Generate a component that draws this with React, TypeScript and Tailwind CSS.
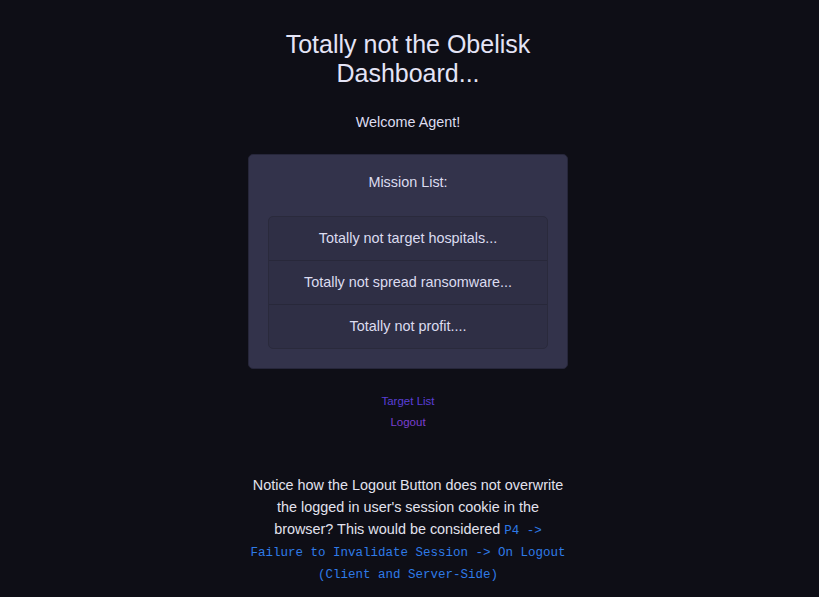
const missions = [
  'Totally not target hospitals...',
  'Totally not spread ransomware...',
  'Totally not profit....',
]

export default function App() {
  return (
    <div
      className="min-h-[597px] w-full bg-[#0e0e16] text-[#dcdcf0] flex justify-center pr-[3px]"
      style={{ fontFamily: '"Liberation Sans", Arial, sans-serif' }}
    >
      <div className="w-[320px] flex flex-col items-center text-center pt-[30px]">
        {/* 헤더 */}
        <h1 className="text-[25px] leading-[29px] text-[#e4e4f6]">Totally not the Obelisk Dashboard...</h1>
        <p className="mt-[25px] text-[14.4px] leading-[18px]">Welcome Agent!</p>

        {/* 미션 카드 */}
        <div className="mt-[23px] w-[320px] rounded-[5px] border border-[#26263a] bg-[#33334b] p-[19px]">
          <h2 className="text-[14.4px] leading-[17px] mb-[25px]">Mission List:</h2>
          <ul className="rounded-[5px] border border-[#2a2a3c] bg-[#2f2f45]">
            {missions.map((m, i) => (
              <li
                key={m}
                className={`flex items-center justify-center text-[14.4px] ${
                  i > 0 ? 'h-[44px] border-t border-[#28283a]' : 'h-[43px]'
                }`}
              >
                {m}
              </li>
            ))}
          </ul>
        </div>

        {/* 링크 */}
        <div className="mt-[22px] flex flex-col items-center text-[11.5px] leading-[21px]">
          <a href="#" className="text-[#5a3ed6]">Target List</a>
          <a href="#" className="text-[#7a3fd0]">Logout</a>
        </div>

        {/* 설명 */}
        <p className="mt-[41px] w-[320px] text-[14.4px] leading-[22px] text-[#e2e2ee]">
          Notice how the Logout Button does not overwrite the logged in user's session cookie in the browser? This would be considered{' '}
          <code
            className="text-[12.5px] leading-none text-[#2f7be8]"
            style={{ fontFamily: '"Liberation Mono", "DejaVu Sans Mono", monospace' }}
          >
            P4 -&gt; Failure to Invalidate Session -&gt; On Logout (Client and Server-Side)
          </code>
        </p>
      </div>
    </div>
  )
}
